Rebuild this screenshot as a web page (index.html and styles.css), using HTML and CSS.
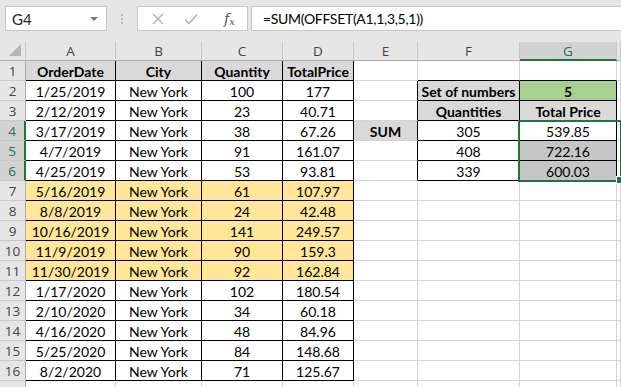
FILE: index.html
```html
<!DOCTYPE html>
<html lang="en">
<head>
  <meta charset="UTF-8" />
  <title>OFFSET sum</title>
  <link rel="stylesheet" href="styles.css">
</head>
<body>
  <div class="toolbar">
    <div class="name-box">
      <span>G4</span>
      <span class="drop"></span>
    </div>
    <div class="grip"><i></i><i></i><i></i></div>
    <div class="fx-box">
      <svg width="12" height="12" viewBox="0 0 12 12"><path d="M1 1L11 11M11 1L1 11" stroke="#b3b3b3" stroke-width="1.4" fill="none"/></svg>
      <svg width="14" height="12" viewBox="0 0 14 12"><path d="M1 6.5L5 10.5L13 1.5" stroke="#b3b3b3" stroke-width="1.6" fill="none"/></svg>
      <span class="fx">f<sub>x</sub></span>
    </div>
    <div class="formula">=SUM(OFFSET(A1,1,3,5,1))</div>
  </div>

  <div class="sheet">
    <div class="hd corner"><span class="tri"></span></div>
    <div class="hd">A</div><div class="hd">B</div><div class="hd">C</div><div class="hd">D</div>
    <div class="hd">E</div><div class="hd">F</div><div class="hd sel">G</div><div class="hd"></div>

    <div class="rh">1</div>
    <div class="c t th">OrderDate</div><div class="c t th">City</div><div class="c t th">Quantity</div><div class="c t th">TotalPrice</div>
    <div class="c"></div><div class="c bb"></div><div class="c bb"></div><div class="c"></div>

    <div class="rh">2</div>
    <div class="c t">1/25/2019</div><div class="c t">New York</div><div class="c t">100</div><div class="c t">177</div>
    <div class="c br"></div><div class="c t th">Set of numbers</div><div class="c t th green">5</div><div class="c"></div>

    <div class="rh">3</div>
    <div class="c t">2/12/2019</div><div class="c t">New York</div><div class="c t">23</div><div class="c t">40.71</div>
    <div class="c br"></div><div class="c t th">Quantities</div><div class="c t th">Total Price</div><div class="c"></div>

    <div class="rh on">4</div>
    <div class="c t">3/17/2019</div><div class="c t">New York</div><div class="c t">38</div><div class="c t">67.26</div>
    <div class="c br th">SUM</div><div class="c t">305</div><div class="c t">539.85</div><div class="c"></div>

    <div class="rh on">5</div>
    <div class="c t">4/7/2019</div><div class="c t">New York</div><div class="c t">91</div><div class="c t">161.07</div>
    <div class="c br"></div><div class="c t">408</div><div class="c t picked">722.16</div><div class="c"></div>

    <div class="rh on">6</div>
    <div class="c t">4/25/2019</div><div class="c t">New York</div><div class="c t">53</div><div class="c t">93.81</div>
    <div class="c br"></div><div class="c t">339</div><div class="c t picked">600.03</div><div class="c"></div>

    <div class="rh">7</div>
    <div class="c t y">5/16/2019</div><div class="c t y">New York</div><div class="c t y">61</div><div class="c t y">107.97</div>
    <div class="c"></div><div class="c"></div><div class="c"></div><div class="c"></div>

    <div class="rh">8</div>
    <div class="c t y">8/8/2019</div><div class="c t y">New York</div><div class="c t y">24</div><div class="c t y">42.48</div>
    <div class="c"></div><div class="c"></div><div class="c"></div><div class="c"></div>

    <div class="rh">9</div>
    <div class="c t y">10/16/2019</div><div class="c t y">New York</div><div class="c t y">141</div><div class="c t y">249.57</div>
    <div class="c"></div><div class="c"></div><div class="c"></div><div class="c"></div>

    <div class="rh">10</div>
    <div class="c t y">11/9/2019</div><div class="c t y">New York</div><div class="c t y">90</div><div class="c t y">159.3</div>
    <div class="c"></div><div class="c"></div><div class="c"></div><div class="c"></div>

    <div class="rh">11</div>
    <div class="c t y">11/30/2019</div><div class="c t y">New York</div><div class="c t y">92</div><div class="c t y">162.84</div>
    <div class="c"></div><div class="c"></div><div class="c"></div><div class="c"></div>

    <div class="rh">12</div>
    <div class="c t">1/17/2020</div><div class="c t">New York</div><div class="c t">102</div><div class="c t">180.54</div>
    <div class="c"></div><div class="c"></div><div class="c"></div><div class="c"></div>

    <div class="rh">13</div>
    <div class="c t">2/10/2020</div><div class="c t">New York</div><div class="c t">34</div><div class="c t">60.18</div>
    <div class="c"></div><div class="c"></div><div class="c"></div><div class="c"></div>

    <div class="rh">14</div>
    <div class="c t">4/16/2020</div><div class="c t">New York</div><div class="c t">48</div><div class="c t">84.96</div>
    <div class="c"></div><div class="c"></div><div class="c"></div><div class="c"></div>

    <div class="rh">15</div>
    <div class="c t">5/25/2020</div><div class="c t">New York</div><div class="c t">84</div><div class="c t">148.68</div>
    <div class="c"></div><div class="c"></div><div class="c"></div><div class="c"></div>

    <div class="rh">16</div>
    <div class="c t">8/2/2020</div><div class="c t">New York</div><div class="c t">71</div><div class="c t">125.67</div>
    <div class="c"></div><div class="c"></div><div class="c"></div><div class="c"></div>

    <div class="rh"></div>
    <div class="c"></div><div class="c"></div><div class="c"></div><div class="c"></div>
    <div class="c"></div><div class="c"></div><div class="c"></div><div class="c"></div>

    <div class="selection"></div>
  </div>
</body>
</html>
```

FILE: styles.css
```css
* { margin: 0; padding: 0; box-sizing: border-box; }

body {
  width: 621px;
  height: 387px;
  overflow: hidden;
  background: #e6e6e6;
  font-family: 'Lato', sans-serif;
  color: #000;
}

/* formula bar */
.toolbar {
  height: 42px;
  display: flex;
  align-items: flex-start;
  padding: 6px 0 0 5px;
}

.name-box {
  width: 102px;
  height: 25px;
  background: #fff;
  border: 1px solid #c6c6c6;
  display: flex;
  align-items: center;
  justify-content: space-between;
  padding: 0 8px 0 6px;
  font-size: 15px;
  color: #222;
}

.drop {
  width: 0;
  height: 0;
  border-left: 4px solid transparent;
  border-right: 4px solid transparent;
  border-top: 4px solid #777;
}

.grip {
  width: 30px;
  height: 25px;
  display: flex;
  flex-direction: column;
  align-items: center;
  justify-content: center;
  gap: 2px;
}

.grip i {
  width: 2px;
  height: 2px;
  background: #b8b8b8;
}

.fx-box {
  width: 111px;
  height: 25px;
  background: #fff;
  border: 1px solid #c6c6c6;
  display: flex;
  align-items: center;
  padding-left: 14px;
  gap: 20px;
}

.fx {
  font-family: 'DejaVu Serif', serif;
  font-style: italic;
  font-size: 14px;
  color: #555;
  margin-left: 6px;
}

.fx sub { font-size: 10px; vertical-align: -1px; }

.formula {
  flex: 1;
  height: 25px;
  margin-left: 3px;
  background: #fff;
  border: 1px solid #c6c6c6;
  border-right: none;
  padding-left: 11px;
  font-size: 14px;
  letter-spacing: -0.3px;
  line-height: 23px;
}

/* grid */
.sheet {
  display: grid;
  grid-template-columns: 26px 90px 86px 81px 71px 64px 102px 97px 1fr;
  grid-template-rows: 19px;
  grid-auto-rows: 20px;
  position: relative;
  background: #fff;
}

.hd {
  background: #e6e6e6;
  border-right: 1px solid #c8c8c8;
  border-bottom: 1px solid #ababab;
  font-family: 'Open Sans', sans-serif;
  font-size: 13.5px;
  color: #444;
  display: flex;
  align-items: center;
  justify-content: center;
}

.hd.sel {
  background: #d2d2d2;
  color: #217346;
  border-bottom: 2px solid #217346;
}

.corner { position: relative; }

.tri {
  position: absolute;
  right: 4px;
  bottom: 4px;
  width: 0;
  height: 0;
  border-left: 12px solid transparent;
  border-bottom: 12px solid #b4b4b4;
}

.rh {
  background: #e6e6e6;
  border-right: 1px solid #ababab;
  border-bottom: 1px solid #c8c8c8;
  font-family: 'Open Sans', sans-serif;
  font-size: 13.5px;
  color: #444;
  display: flex;
  align-items: center;
  justify-content: center;
}

.rh.on {
  background: #d2d2d2;
  color: #217346;
  border-right: 2px solid #217346;
}

.c {
  border-right: 1px solid #d4d4d4;
  border-bottom: 1px solid #d4d4d4;
  font-size: 14px;
  line-height: 19px;
  padding-top: 1px;
  text-align: center;
  white-space: nowrap;
  overflow: hidden;
}

.c.t { border-right-color: #000; border-bottom-color: #000; }
.c.bb { border-bottom-color: #000; }
.c.br { border-right-color: #000; }

.th { background: #d9d9d9; font-weight: bold; }
.green { background: #a9d08e; }
.y { background: #ffe699; }
.picked { background: #c6c6c6; }

/* active range outline, laid over G4:G6 */
.selection {
  position: absolute;
  grid-column: 8;
  grid-row: 5 / 8;
  top: -1px;
  bottom: -1px;
  left: -2px;
  right: -1px;
  border: 2px solid #217346;
  pointer-events: none;
}

.selection::after {
  content: "";
  position: absolute;
  right: -4px;
  bottom: -4px;
  width: 6px;
  height: 6px;
  background: #217346;
  border: 1px solid #fff;
}
```
